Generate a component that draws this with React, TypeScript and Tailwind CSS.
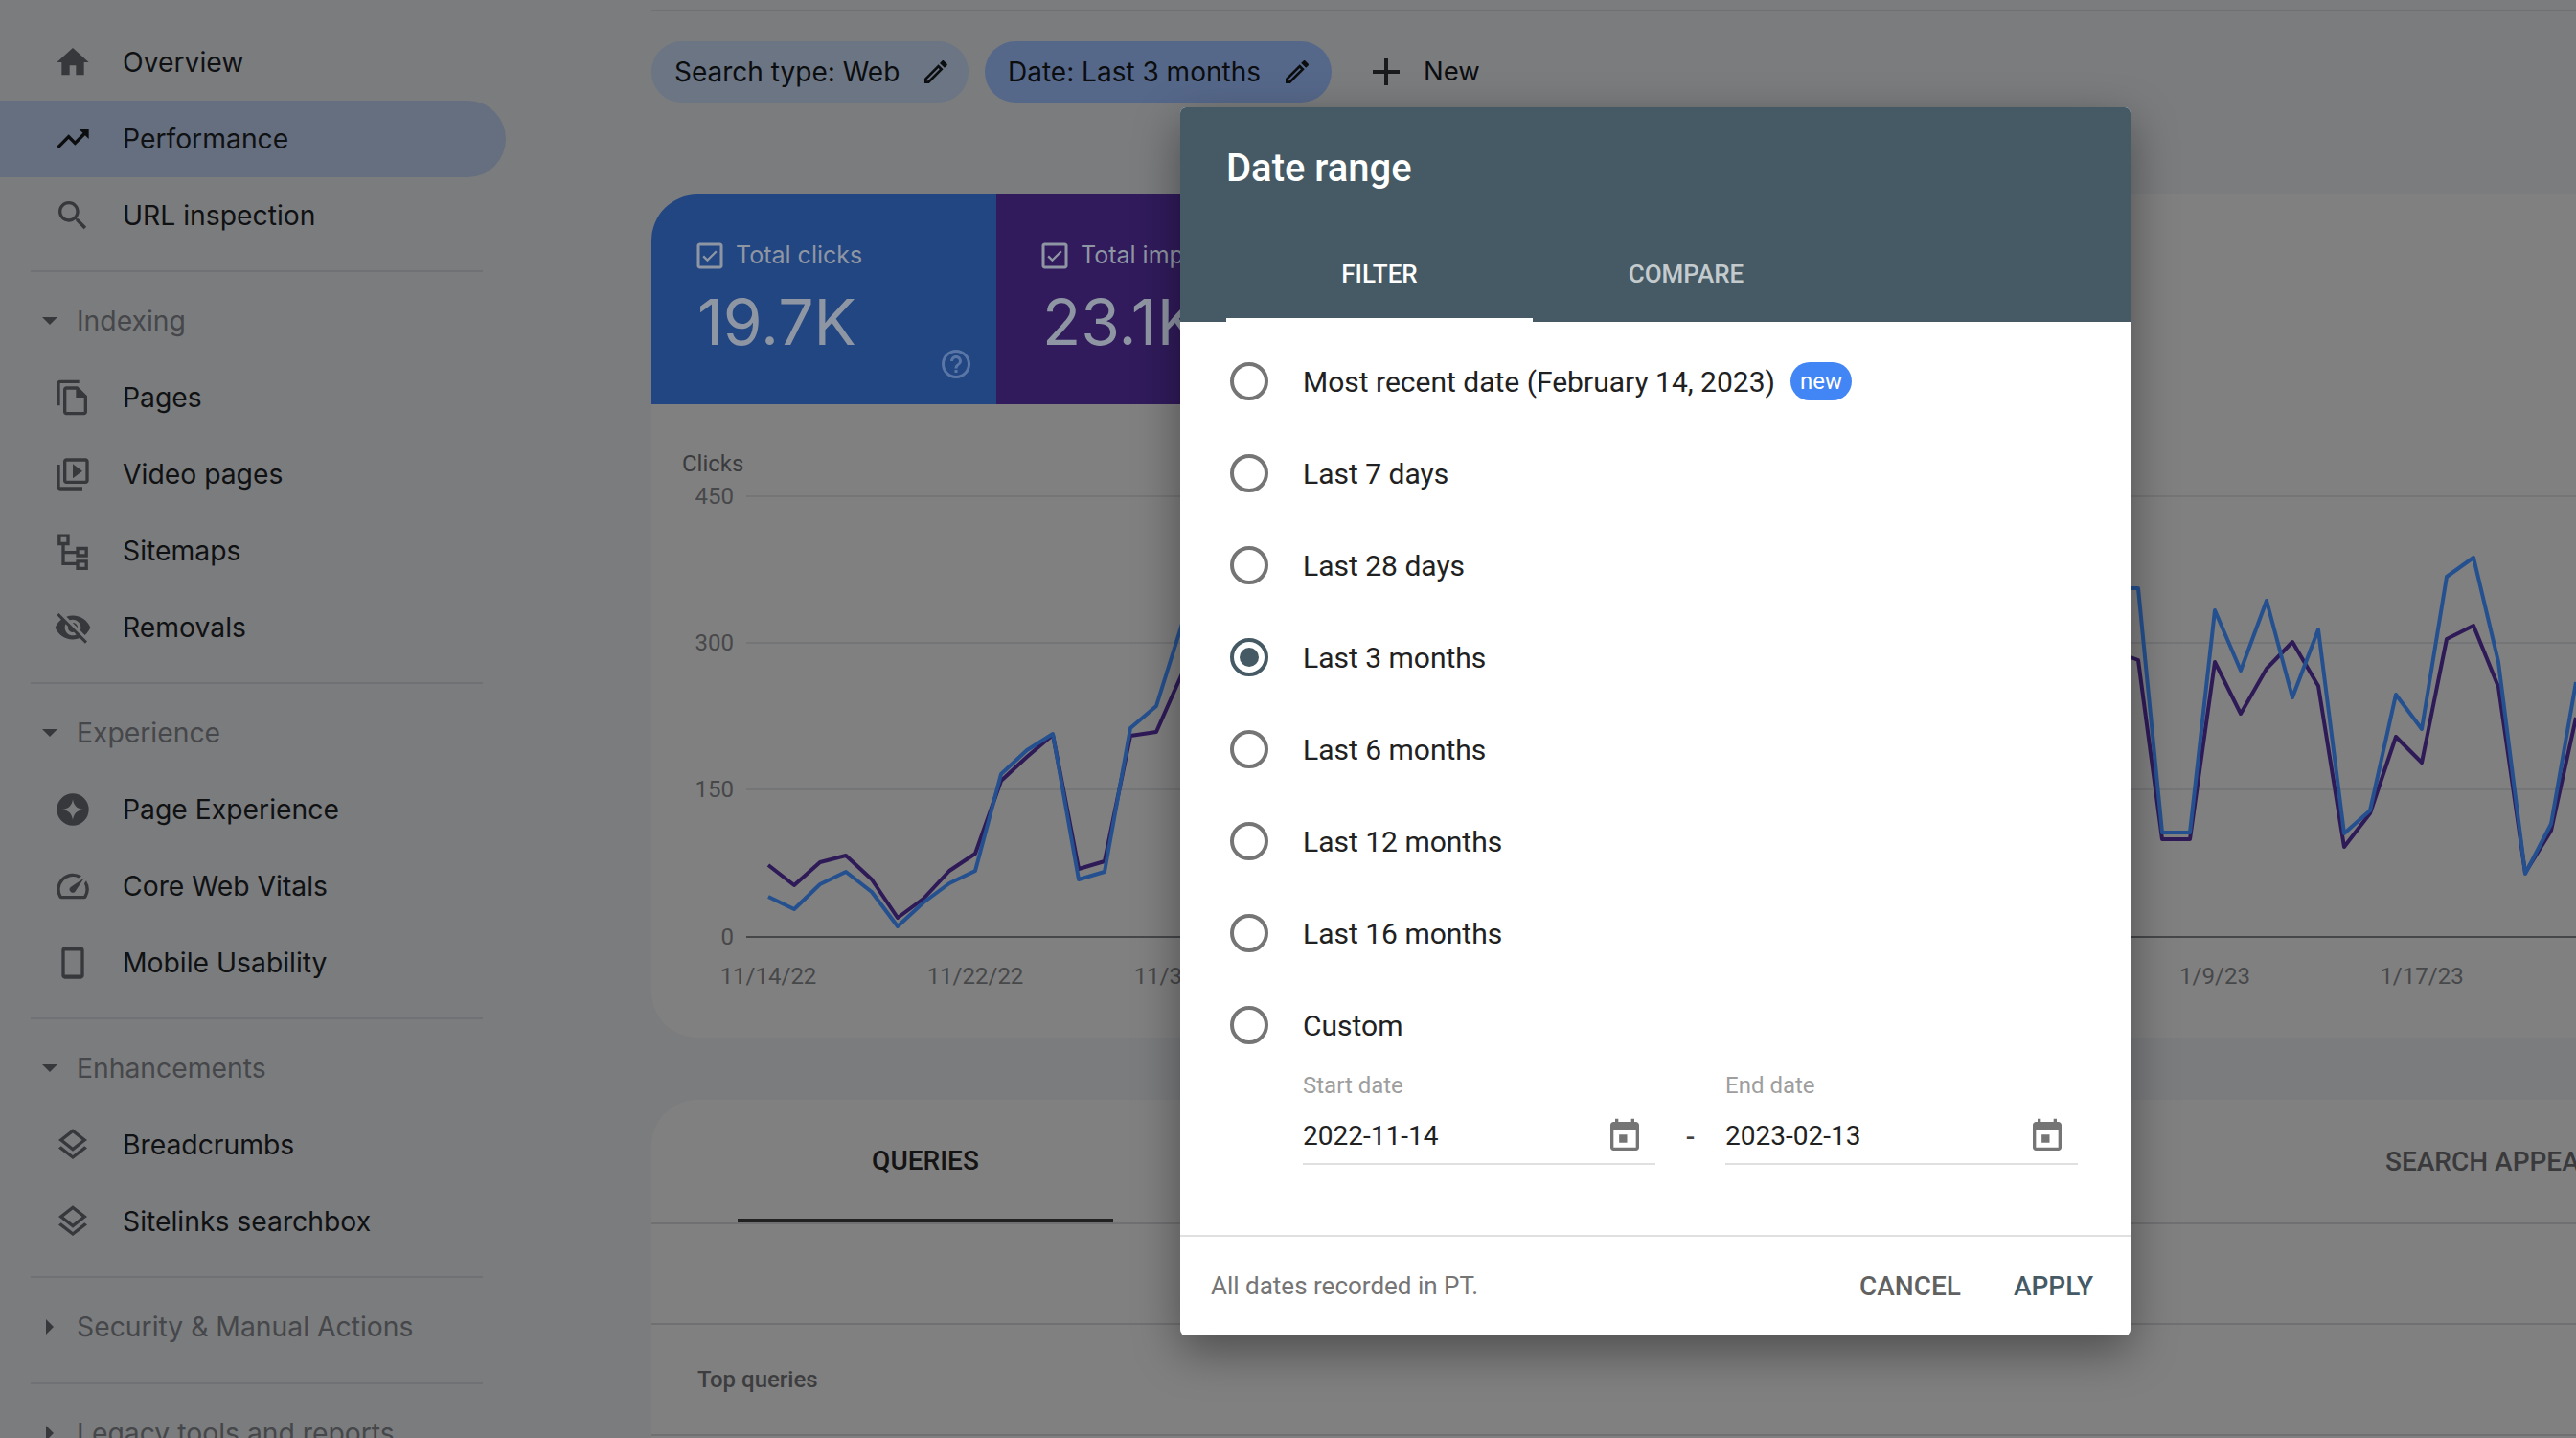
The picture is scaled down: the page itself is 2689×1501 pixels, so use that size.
import type { ReactNode } from "react";

const paths = {
  home: "M10 20v-6h4v6h5v-8h3L12 3 2 12h3v8z",
  trend: "M16 6l2.29 2.29-4.88 4.88-4-4L2 16.59 3.41 18l6-6 4 4 6.3-6.29L22 12V6z",
  search:
    "M15.5 14h-.79l-.28-.27C15.41 12.59 16 11.11 16 9.5 16 5.91 13.09 3 9.5 3S3 5.91 3 9.5 5.91 16 9.5 16c1.61 0 3.09-.59 4.23-1.57l.27.28v.79l5 4.99L20.49 19l-4.99-5zm-6 0C7.01 14 5 11.99 5 9.5S7.01 5 9.5 5 14 7.01 14 9.5 11.99 14 9.5 14z",
  pages:
    "M16 1H4c-1.1 0-2 .9-2 2v14h2V3h12V1zm-1 4H8c-1.1 0-1.99.9-1.99 2L6 21c0 1.1.89 2 1.99 2H19c1.1 0 2-.9 2-2V11l-6-6zM8 21V7h6v5h5v9H8z",
  video:
    "M4 6H2v14c0 1.1.9 2 2 2h14v-2H4V6zm16-4H8c-1.1 0-2 .9-2 2v12c0 1.1.9 2 2 2h12c1.1 0 2-.9 2-2V4c0-1.1-.9-2-2-2zm0 14H8V4h12v12zM12 5.5v9l6-4.5z",
  sitemap:
    "M2.5 1.5h7.5v7H7v3.5h7V9.5h7.5v6.5H14V14H7v5h7v-1.5h7.5V24H14v-3H5V8.500H2.500zM4.500 3.500v3h3.500v-3zM16 11.500v2.500h3.500v-2.500zM16 19.500v2.500h3.500v-2.500z",
  hidden:
    "M12 7c2.76 0 5 2.24 5 5 0 .65-.13 1.26-.36 1.83l2.92 2.92c1.51-1.26 2.7-2.89 3.43-4.75-1.73-4.39-6-7.5-11-7.5-1.4 0-2.74.25-3.98.7l2.16 2.16C10.74 7.13 11.35 7 12 7zM2 4.27l2.28 2.28.46.46C3.08 8.3 1.78 10.02 1 12c1.73 4.39 6 7.5 11 7.5 1.55 0 3.03-.3 4.38-.84l.42.42L19.73 22 21 20.73 3.27 3 2 4.27zM7.53 9.8l1.55 1.55c-.05.21-.08.43-.08.65 0 1.66 1.34 3 3 3 .22 0 .44-.03.65-.08l1.55 1.55c-.67.33-1.41.53-2.2.53-2.76 0-5-2.24-5-5 0-.79.2-1.53.53-2.2zm4.31-.78l3.15 3.15.02-.16c0-1.66-1.34-3-3-3l-.17.01z",
  experience:
    "M12 2a10 10 0 1 0 0 20 10 10 0 0 0 0-20zM12 5.500C12.700 9.600 14.400 11.300 18.500 12 14.400 12.700 12.700 14.400 12 18.500 11.300 14.400 9.600 12.700 5.500 12 9.600 11.300 11.300 9.600 12 5.500z",
  speed:
    "M20.38 8.57l-1.23 1.85a8 8 0 0 1-.22 7.58H5.07A8 8 0 0 1 15.58 6.85l1.85-1.23A10 10 0 0 0 3.35 19a2 2 0 0 0 1.72 1h13.85a2 2 0 0 0 1.74-1 10 10 0 0 0-.27-10.44zm-9.79 6.84a2 2 0 0 0 2.83 0l5.66-8.49-8.49 5.66a2 2 0 0 0 0 2.83z",
  mobile:
    "M7 2h10c1.100 0 2 .9 2 2v16c0 1.100-.9 2-2 2H7c-1.100 0-2-.9-2-2V4c0-1.100.9-2 2-2zm0 2.500V19.500h10V4.500z",
  layers:
    "M11.99 18.54l-7.37-5.73L3 14.07l9 7 9-7-1.63-1.27-7.38 5.74zM12 16l7.36-5.73L21 9l-9-7-9 7 1.63 1.27L12 16zm0-11.47L17.74 9 12 13.47 6.26 9 12 4.53z",
  pencil:
    "M14.06 9.02l.92.92L5.92 19H5v-.92l9.06-9.06M17.66 3c-.25 0-.51.1-.7.29l-1.83 1.83 3.75 3.75 1.83-1.83c.39-.39.39-1.02 0-1.41l-2.34-2.34c-.2-.2-.45-.29-.71-.29zm-3.6 3.19L3 17.25V21h3.75L17.81 9.94l-3.75-3.75z",
  plus: "M19 13h-6v6h-2v-6H5v-2h6V5h2v6h6v2z",
  help:
    "M11 18h2v-2h-2v2zm1-16C6.48 2 2 6.48 2 12s4.48 10 10 10 10-4.48 10-10S17.52 2 12 2zm0 18c-4.41 0-8-3.59-8-8s3.59-8 8-8 8 3.59 8 8-3.59 8-8 8zm0-14c-2.21 0-4 1.79-4 4h2c0-1.1.9-2 2-2s2 .9 2 2c0 2-3 1.75-3 5h2c0-2.25 3-2.5 3-5 0-2.21-1.79-4-4-4z",
  event:
    "M8.500 11h5v5h-5zM16 1v2H8V1H6v2H5c-1.11 0-1.99.9-1.99 2L3 19c0 1.1.89 2 2 2h14c1.1 0 2-.9 2-2V5c0-1.1-.9-2-2-2h-1V1h-2zm3 18H5V8h14v11z",
  checkbox:
    "M5 3h14c1.100 0 2 .9 2 2v14c0 1.100-.9 2-2 2H5c-1.100 0-2-.9-2-2V5c0-1.100.9-2 2-2zm0 2v14h14V5zM10.300 16.200L6.900 12.800l1.100-1.100 2.300 2.300 5.700-5.700 1.100 1.100z",
};

const Icon = ({ d, className }: { d: string; className?: string }) => (
  <svg viewBox="0 0 24 24" fill="currentColor" fillRule="evenodd" className={className}>
    <path d={d} />
  </svg>
);

const NavItem = ({ icon, label, active }: { icon: string; label: string; active?: boolean }) => (
  <div
    className={`flex h-20 w-[528px] items-center rounded-r-[40px] pl-[56px] text-[28.300px] text-[#101113] ${
      active ? "bg-[#666f7f]" : ""
    }`}
  >
    <Icon d={icon} className={`h-10 w-10 shrink-0 ${active ? "text-[#0c0d0f]" : "text-[#37383b]"}`} />
    <span className="ml-[32px] whitespace-nowrap">{label}</span>
  </div>
);

const Section = ({ label, open = true, children }: { label: string; open?: boolean; children?: ReactNode }) => (
  <div className="mt-[17px]">
    <div className="ml-8 h-[2px] w-[472px] bg-[#707174]" />
    <div className={`mt-[31px] flex h-10 items-center text-[28.300px] text-[#46474a] ${open ? "mb-[20px]" : "mb-[38px]"}`}>
      <span
        className={
          open
            ? "ml-[44px] mr-[20px] h-0 w-0 border-x-[8px] border-t-[8px] border-x-transparent border-t-[#37383b]"
            : "ml-[48px] mr-[24px] h-0 w-0 border-y-[8px] border-l-[8px] border-y-transparent border-l-[#37383b]"
        }
      />
      <span className="whitespace-nowrap">{label}</span>
    </div>
    {children}
  </div>
);

const Chip = ({ label, className }: { label: string; className: string }) => (
  <div className={`flex h-16 items-center rounded-[32px] pl-6 pr-[18px] text-[28px] text-[#0c0d0f] ${className}`}>
    <span className="whitespace-nowrap">{label}</span>
    <Icon d={paths.pencil} className="ml-[22px] h-8 w-8" />
  </div>
);

const Score = ({ label, value, className, help }: { label: string; value: string; className: string; help?: boolean }) => (
  <div className={`relative h-[219px] w-[360px] shrink-0 pl-12 pt-[48px] text-[#8f96a3] ${className}`}>
    <div className="flex h-8 items-center">
      <Icon d={paths.checkbox} className="-ml-[5px] h-[36px] w-[36px] shrink-0" />
      <span className="ml-[9px] whitespace-nowrap text-[25px]">{label}</span>
    </div>
    <div className="mt-[15px] text-[66px] leading-[76px]">{value}</div>
    {help && <Icon d={paths.help} className="absolute right-[24px] top-[159px] h-9 w-9 text-[#5a76a6]" />}
  </div>
);

const purple = [
  [802, 903], [829, 924], [856, 900], [883, 893], [910, 918], [937, 958], [964, 938], [991, 909], [1018, 891],
  [1045, 815], [1072, 790], [1099, 767], [1126, 907], [1153, 899], [1180, 768], [1207, 764], [1234, 703], [1260, 640],
];
const blue = [
  [802, 936], [829, 949], [856, 923], [883, 910], [910, 931], [937, 967], [964, 942], [991, 922], [1018, 909],
  [1045, 808], [1072, 783], [1099, 766], [1126, 918], [1153, 910], [1180, 760], [1207, 737], [1234, 651], [1260, 600],
];
const purpleRight = [
  [2224, 686], [2232, 689], [2257, 876], [2286, 876], [2312, 691], [2339, 745], [2366, 698], [2393, 670], [2420, 716],
  [2447, 884], [2474, 849], [2501, 769], [2528, 796], [2554, 667], [2582, 653], [2608, 717], [2636, 911], [2663, 867], [2689, 749],
];
const blueRight = [
  [2224, 614], [2232, 614], [2257, 869], [2286, 869], [2312, 637], [2339, 700], [2366, 627], [2393, 728], [2420, 657],
  [2447, 870], [2474, 846], [2501, 725], [2528, 761], [2554, 602], [2582, 582], [2608, 691], [2636, 912], [2663, 860], [2689, 712],
];

const toPoints = (pts: number[][]) => pts.map((p) => p.join(",")).join(" ");

const Chart = () => (
  <svg viewBox="680 422 2009 661" className="block h-[661px] w-[2009px] font-['Roboto',sans-serif] text-[24px]">
    <text x={712} y={484} dominantBaseline="central" fill="#3a3b3d">Clicks</text>
    {[
      [518, "450"],
      [671, "300"],
      [824, "150"],
      [978, "0"],
    ].map(([y, label]) => (
      <g key={label}>
        <line x1={779} x2={2689} y1={y} y2={y} stroke={label === "0" ? "#464749" : "#747577"} strokeWidth={2} />
        <text x={766} y={y} textAnchor="end" dominantBaseline="central" fill="#47484a">{label}</text>
      </g>
    ))}
    {[
      [802, "11/14/22"],
      [1018, "11/22/22"],
      [1234, "11/30/22"],
      [2312, "1/9/23"],
      [2528, "1/17/23"],
    ].map(([x, label]) => (
      <text key={label} x={x} y={1019} textAnchor="middle" dominantBaseline="central" fill="#47484a">{label}</text>
    ))}
    <polyline points={toPoints(purple)} fill="none" stroke="#2f1a58" strokeWidth={4} strokeLinejoin="round" />
    <polyline points={toPoints(blue)} fill="none" stroke="#25508f" strokeWidth={4} strokeLinejoin="round" />
    <polyline points={toPoints(purpleRight)} fill="none" stroke="#2f1a58" strokeWidth={4} strokeLinejoin="round" />
    <polyline points={toPoints(blueRight)} fill="none" stroke="#25508f" strokeWidth={4} strokeLinejoin="round" />
  </svg>
);

const Radio = ({ label, checked, children }: { label: string; checked?: boolean; children?: ReactNode }) => (
  <div className="flex h-24 items-center pl-[52px]">
    <span
      className={`flex h-10 w-10 shrink-0 items-center justify-center rounded-full border-[4px] ${
        checked ? "border-[#455a64]" : "border-[#757575]"
      }`}
    >
      {checked && <span className="h-5 w-5 rounded-full bg-[#455a64]" />}
    </span>
    <span className="ml-9 whitespace-nowrap text-[30px] text-[#212121]">{label}</span>
    {children}
  </div>
);

const DateField = ({ label, value }: { label: string; value: string }) => (
  <div className="w-[368px]">
    <div className="h-[30px] text-[24px] leading-[30px] text-[#9e9e9e]">{label}</div>
    <div className="mt-[12px] flex h-[56px] items-center justify-between border-b-2 border-[#e0e0e0] pb-[2px] pr-3">
      <span className="text-[28px] text-[#212121]">{value}</span>
      <Icon d={paths.event} className="h-10 w-10 text-[#757575]" />
    </div>
  </div>
);

const DateDialog = () => (
  <div className="absolute left-[1232px] top-[112px] w-[992px] overflow-hidden rounded-[6px] bg-white font-['Roboto',sans-serif] shadow-[0_16px_48px_rgba(0,0,0,0.4)]">
    <div className="h-[224px] bg-[#455a64]">
      <div className="flex h-32 items-center pl-12 text-[40px] font-medium text-white">Date range</div>
      <div className="flex h-24 pl-12 text-[26px] font-medium">
        <div className="flex w-80 items-center justify-center border-b-4 border-white pt-[1px] text-white">FILTER</div>
        <div className="flex w-80 items-center justify-center border-b-4 border-transparent pt-[1px] text-white/70">COMPARE</div>
      </div>
    </div>
    <div className="h-[953px] pt-[14px]">
      <Radio label="Most recent date (February 14, 2023)">
        <span className="ml-4 flex h-10 w-16 items-center justify-center rounded-[20px] bg-[#4285f4] text-[24px] text-white">
          new
        </span>
      </Radio>
      <Radio label="Last 7 days" />
      <Radio label="Last 28 days" />
      <Radio label="Last 3 months" checked />
      <Radio label="Last 6 months" />
      <Radio label="Last 12 months" />
      <Radio label="Last 16 months" />
      <Radio label="Custom" />
      <div className="flex pl-[128px]">
        <DateField label="Start date" value="2022-11-14" />
        <div className="mt-[42px] flex h-[54px] w-[73px] items-center justify-center text-[28px] font-medium text-[#424242]">-</div>
        <DateField label="End date" value="2023-02-13" />
      </div>
    </div>
    <div className="flex h-[105px] items-center justify-between border-t-2 border-[#e0e0e0] pl-8 pr-[39px]">
      <span className="text-[26px] text-[#757575]">All dates recorded in PT.</span>
      <div className="flex gap-[55px] text-[28px] font-medium">
        <span className="text-[#616161]">CANCEL</span>
        <span className="text-[#455a64]">APPLY</span>
      </div>
    </div>
  </div>
);

export default function App() {
  return (
    <div className="relative flex h-[1501px] w-[2689px] overflow-hidden bg-[#7b7c7e] font-['Inter',sans-serif]">
      {/* Sidebar */}
      <aside className="w-[680px] shrink-0 pt-[25px]">
        <NavItem icon={paths.home} label="Overview" />
        <NavItem icon={paths.trend} label="Performance" active />
        <NavItem icon={paths.search} label="URL inspection" />
        <Section label="Indexing">
          <NavItem icon={paths.pages} label="Pages" />
          <NavItem icon={paths.video} label="Video pages" />
          <NavItem icon={paths.sitemap} label="Sitemaps" />
          <NavItem icon={paths.hidden} label="Removals" />
        </Section>
        <Section label="Experience">
          <NavItem icon={paths.experience} label="Page Experience" />
          <NavItem icon={paths.speed} label="Core Web Vitals" />
          <NavItem icon={paths.mobile} label="Mobile Usability" />
        </Section>
        <Section label="Enhancements">
          <NavItem icon={paths.layers} label="Breadcrumbs" />
          <NavItem icon={paths.layers} label="Sitelinks searchbox" />
        </Section>
        <Section label="Security & Manual Actions" open={false} />
        <Section label="Legacy tools and reports" open={false} />
      </aside>

      {/* Main */}
      <main className="w-[2009px] shrink-0 pt-[10px]">
        <div className="h-[2px] bg-[#707174]" />
        <div className="mt-[31px] flex items-center">
          <Chip label="Search type: Web" className="w-[331px] bg-[#6b7584]" />
          <Chip label="Date: Last 3 months" className="ml-[17px] w-[362px] bg-[#56688a]" />
          <Icon d={paths.plus} className="ml-[33px] h-12 w-12 text-[#1a1b1d]" />
          <span className="ml-[15px] text-[27.500px] text-[#0c0d0f]">New</span>
        </div>

        <section className="mt-24 h-[880px] rounded-l-[48px] bg-[#808080]">
          <div className="flex">
            <Score label="Total clicks" value="19.7K" className="rounded-tl-[48px] bg-[#224682]" help />
            <Score label="Total impressions" value="23.1K" className="w-[400px] bg-[#311b5c]" />
          </div>
          <Chart />
        </section>

        <section className="mt-[65px] h-[400px] rounded-l-[48px] bg-[#808080] font-['Roboto',sans-serif]">
          <div className="flex h-[130px] border-b-2 border-[#707072] text-[28px] font-medium">
            <div className="ml-[90px] flex w-[392px] shrink-0 items-center justify-center border-b-4 border-[#212121] pt-[3px] text-[#141414]">
              QUERIES
            </div>
            <div className="ml-[1328px] flex shrink-0 items-center whitespace-nowrap pt-[1px] text-[#3a3a3c]">SEARCH APPEARANCE</div>
          </div>
          <div className="h-[105px] border-b-2 border-[#707072]" />
          <div className="flex h-[116px] items-center border-b-2 border-[#707072] pl-12 text-[24px] font-medium text-[#3d3d3f]">
            Top queries
          </div>
        </section>
      </main>

      <DateDialog />
    </div>
  );
}
